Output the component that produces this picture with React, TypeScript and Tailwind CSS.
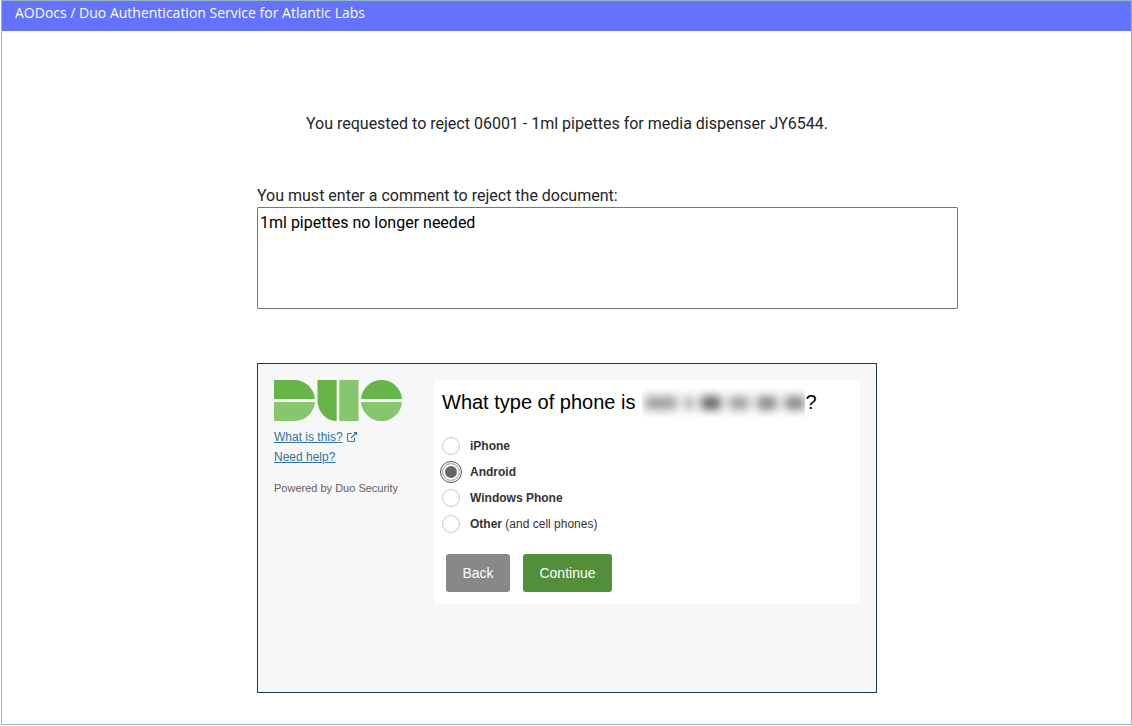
import React, { useState } from "react";

const phoneTypes = [
  { id: "iphone", label: "iPhone", note: "" },
  { id: "android", label: "Android", note: "" },
  { id: "windows", label: "Windows Phone", note: "" },
  { id: "other", label: "Other", note: "(and cell phones)" },
];

function DuoLogo() {
  return (
    <svg role="img" aria-label="Duo" viewBox="0 0 128 41" className="block h-[41px] w-32">
      <g fill="#67b548">
        <path d="M0 0H20.500A20.500 20.500 0 0 1 40.950 19H0Z" />
        <path d="M43.500 0H62.700V41A19.200 20.500 0 0 1 43.500 20.500Z" />
        <path d="M87.050 19A20.500 20.500 0 0 1 127.950 19Z" />
      </g>
      <g fill="#86c66d">
        <path d="M0 22H40.950A20.500 20.500 0 0 1 20.500 41H0Z" />
        <path d="M65.300 0H84.500V41H65.300Z" />
        <path d="M87.050 22H127.950A20.500 20.500 0 0 1 87.050 22Z" />
      </g>
    </svg>
  );
}

function ExternalIcon() {
  return (
    <svg aria-hidden="true" viewBox="0 0 10 10" className="h-[10px] w-[10px]" fill="none" stroke="#2f74a3">
      <path d="M4.500 1.500H.6V9.400H7.500V5.500" strokeWidth="1" />
      <path d="M4 6L8.500 1.500" strokeWidth="1.1" />
      <path d="M6.300 0H10V3.700Z" fill="#2f74a3" stroke="none" />
    </svg>
  );
}

export default function App() {
  const [choice, setChoice] = useState("android");
  const [comment, setComment] = useState("1ml pipettes no longer needed");

  return (
    <div className="flex min-h-screen flex-col bg-white pb-px pl-px font-['Roboto',sans-serif] text-base text-[#212529]">
      <div className="flex grow flex-col border border-[#9ab3c5]">
        <header className="h-[30px] bg-[#6373ff] px-[13px] pt-[2px] font-['Open_Sans',sans-serif] text-sm leading-5 text-white">
          AODocs / Duo Authentication Service for Atlantic Labs
        </header>
        <main className="mx-auto w-[621px] pt-[81px] pb-[31px] pl-px">
          <p className="text-center leading-6">
            You requested to reject 06001 - 1ml pipettes for media dispenser JY6544.
          </p>
          <label htmlFor="comment" className="mt-12 block h-[23px] leading-6">
            You must enter a comment to reject the document:
          </label>
          <textarea
            id="comment"
            value={comment}
            onChange={(e) => setComment(e.target.value)}
            className="block h-[102px] w-[701px] resize-none rounded-[1px] border border-[#767676] px-[2px] py-[3px] leading-6 text-black outline-none"
          />
          <section className="mt-[54px] flex min-h-[330px] items-start border border-[#1b3a57] bg-[#f7f7f7] p-4 font-['Liberation_Sans',sans-serif]">
            <aside className="w-40 shrink-0 text-xs">
              <DuoLogo />
              <div className="mt-[6px] flex items-center gap-1 leading-5">
                <a href="#what" className="text-[#2f74a3] underline">What is this?</a>
                <ExternalIcon />
              </div>
              <a href="#help" className="block leading-5 text-[#2f74a3] underline">Need help?</a>
              <p className="mt-[11px] text-[11px] leading-5 text-[#626262]">Powered by Duo Security</p>
            </aside>
            <form
              onSubmit={(e) => e.preventDefault()}
              className="grow rounded-[2px] bg-white px-2 pb-3"
            >
              <h1 className="flex h-[53px] items-start pt-2 text-xl leading-7 text-black">
                <span>What type of phone is</span>
                <span className="ml-[7px] flex h-[30px] w-[163px] items-center justify-end overflow-hidden">
                  <span aria-hidden="true" className="flex items-center gap-2 blur-[5px]">
                    <span className="h-[14px] w-8 bg-[#a0a0a0]" />
                    <span className="h-[14px] w-2 bg-[#a0a0a0]" />
                    <span className="h-[14px] w-5 bg-[#666666]" />
                    <span className="h-[14px] w-5 bg-[#a0a0a0]" />
                    <span className="h-[14px] w-5 bg-[#888888]" />
                    <span className="h-[14px] w-5 bg-[#888888]" />
                  </span>
                </span>
                <span>?</span>
              </h1>
              <fieldset>
                {phoneTypes.map((type) => (
                  <label key={type.id} className="flex h-[26px] items-center gap-[10px] text-xs text-[#333333]">
                    <input
                      type="radio"
                      name="phone"
                      checked={choice === type.id}
                      onChange={() => setChoice(type.id)}
                      className="h-[18px] w-[18px] appearance-none rounded-full border border-[#c8c8c8] bg-white checked:border-[#bbbbbb] checked:bg-[#666666] checked:shadow-[inset_0_0_0_2px_#fff] checked:outline checked:outline-1 checked:outline-offset-1 checked:outline-[#555555]"
                    />
                    <span>
                      <b>{type.label}</b>
                      {type.note && ` ${type.note}`}
                    </span>
                  </label>
                ))}
              </fieldset>
              <div className="mt-[17px] ml-1 flex gap-[13px] text-sm text-white">
                <button type="button" className="h-[38px] w-16 rounded-[3px] bg-[#888888]">Back</button>
                <button type="submit" className="h-[38px] w-[89px] rounded-[3px] bg-[#538f3a]">Continue</button>
              </div>
            </form>
          </section>
        </main>
      </div>
    </div>
  );
}
